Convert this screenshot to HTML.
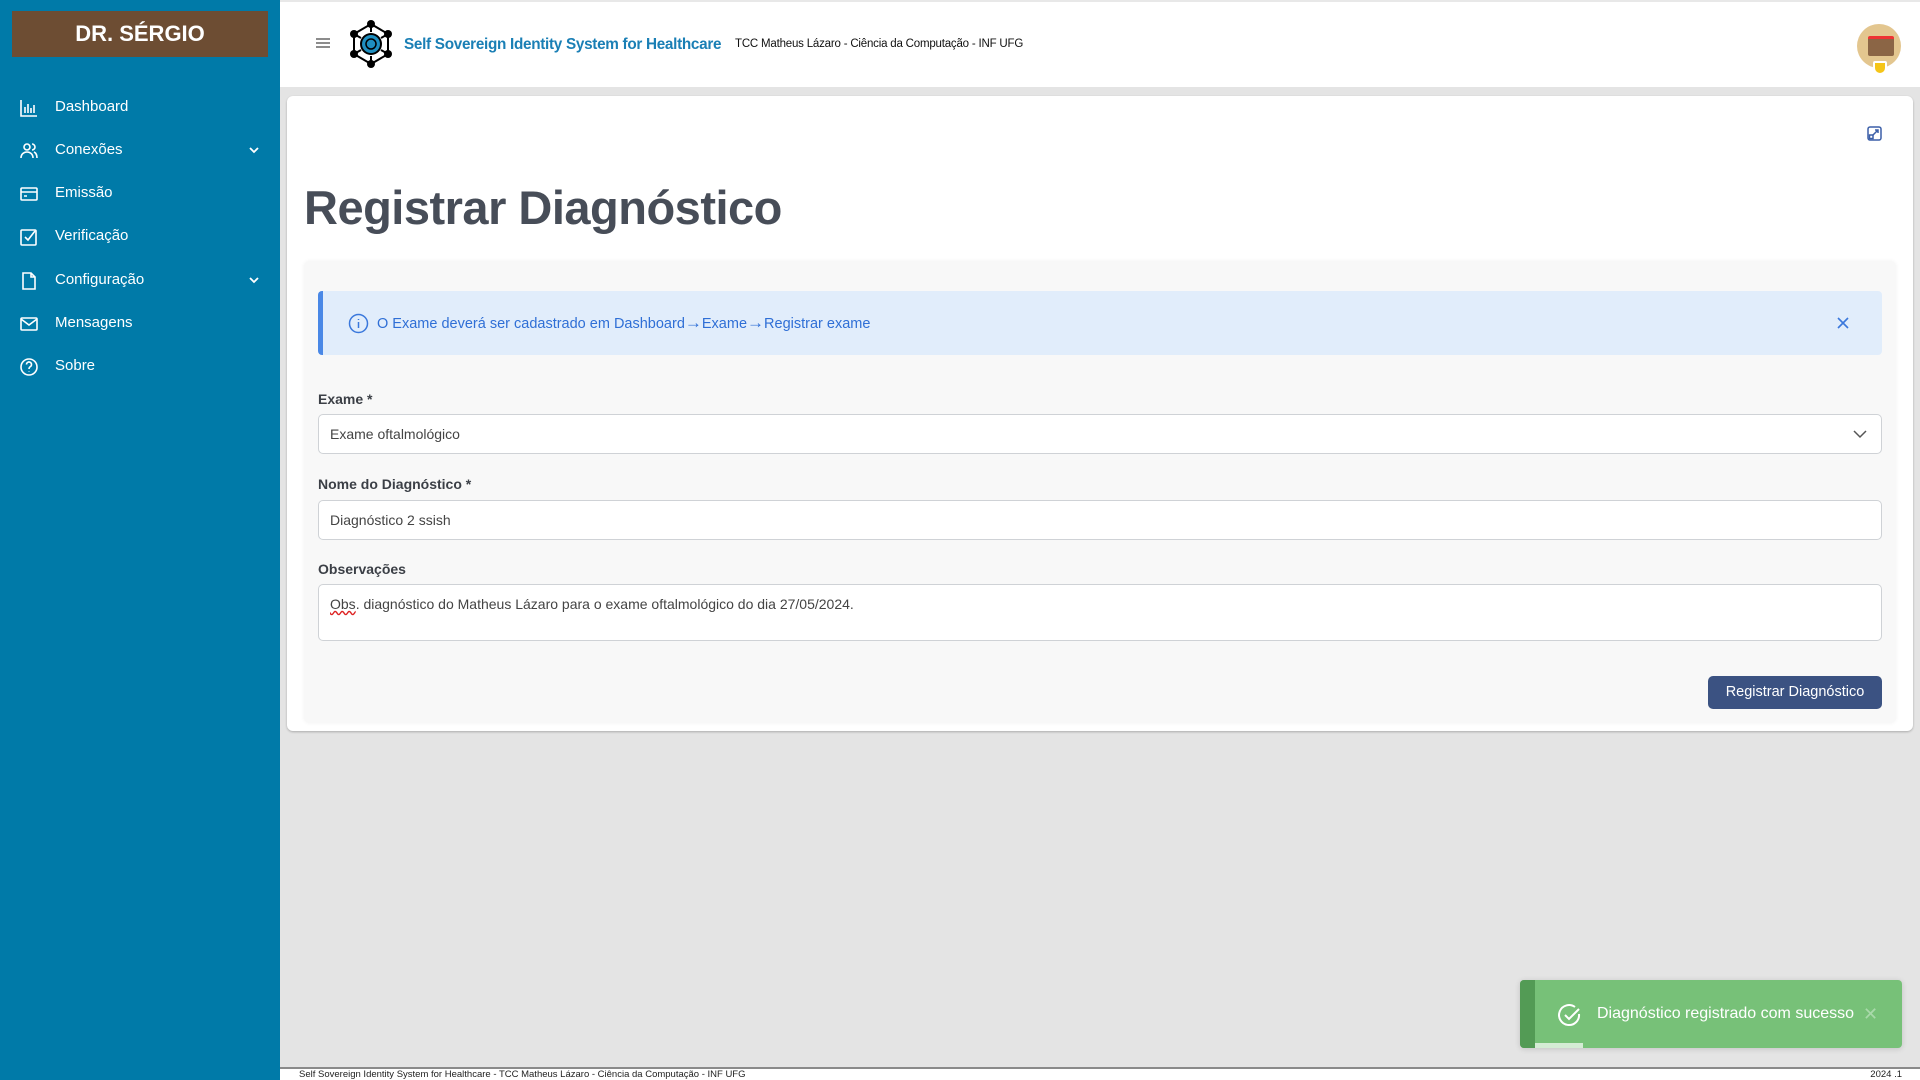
<!DOCTYPE html>
<html><head><meta charset="utf-8"><style>
*{box-sizing:border-box;margin:0;padding:0}
body{width:1920px;height:1080px;overflow:hidden;background:#e4e4e4;font-family:"Liberation Sans",sans-serif;position:relative}
.sb{position:absolute;left:0;top:0;width:280px;height:1080px;background:#007aa8}
.name{position:absolute;left:12px;top:11px;width:256px;height:46px;background:#6d4d33;color:#fff;font-weight:bold;font-size:22px;text-align:center;line-height:46px}
.nav{position:absolute;left:0;width:280px;color:#fff;font-size:15px;height:24px;line-height:24px}
.nav svg{position:absolute;left:19px;top:3px}
.nav span{position:absolute;left:55px}
.nav .ch{position:absolute;left:248px;top:6px}
.hd{position:absolute;left:280px;top:0;width:1640px;height:87px;background:#fff;border-top:2px solid #e8e8e8}
.card{position:absolute;left:287px;top:96px;width:1626px;height:635px;background:#fff;border-radius:6px;box-shadow:0 1px 2px rgba(0,0,0,.25)}
.panel{position:absolute;left:17px;top:165px;width:1592px;height:462px;background:#f8f8f8;border-radius:6px;box-shadow:0 0 4px rgba(0,0,0,.06)}
h1{position:absolute;left:17px;top:84px;font-size:47px;color:#474d58;font-weight:bold;letter-spacing:-0.5px}
.alert{position:absolute;left:14px;top:30px;width:1564px;height:64px;background:#e1edfb;border-left:5px solid #4a88e6;border-radius:4px;color:#2f6fd6;font-size:14.5px;line-height:64px;padding-left:54px}
.lbl{position:absolute;left:14px;font-size:14px;font-weight:bold;color:#3b3f46}
.inp{position:absolute;left:14px;width:1564px;height:40px;background:#fff;border:1px solid #cfd2d6;border-radius:5px;font-size:14px;color:#444;padding:0 11px;line-height:38px}
.btn{position:absolute;left:1404px;top:415px;width:174px;height:33px;background:#3b5282;color:#fff;border-radius:5px;font-size:14.5px;text-align:center;line-height:33px}
.toast{position:absolute;left:1520px;top:980px;width:382px;height:68px;background:#77c178;border-radius:4px;box-shadow:0 1px 6px rgba(0,0,0,.15);color:#fff;font-size:16px;line-height:68px;padding-left:77px;overflow:hidden}
.foot{position:absolute;left:280px;top:1067px;width:1640px;height:13px;background:#fff;border-top:2px solid #8a8a8a;font-size:9.5px;color:#222;line-height:11px}
</style></head><body>
<div class="sb">
<div class="name">DR. SÉRGIO</div>
<div class="nav" style="top:95px"><svg width="20" height="20" fill="none" stroke="#fff" stroke-width="1.6"><path d="M2 2v16h16M6 15V9M9 15V6M12 15V10M15 15V7"/></svg><span>Dashboard</span></div>
<div class="nav" style="top:138px"><svg width="20" height="20" fill="none" stroke="#fff" stroke-width="1.6"><circle cx="8" cy="6" r="3"/><path d="M2 17c0-4 3-6 6-6s6 2 6 6M13 3a3 3 0 010 6M15 11c2 1 3 3 3 6"/></svg><span>Conexões</span><svg class="ch" width="12" height="12" fill="none" stroke="#fff" stroke-width="1.8" style="left:248px;top:6px"><path d="M2 4l4 4 4-4"/></svg></div>
<div class="nav" style="top:181px"><svg width="20" height="20" fill="none" stroke="#fff" stroke-width="1.6"><rect x="2" y="4" width="16" height="12" rx="1"/><path d="M2 8h16M5 12h3"/></svg><span>Emissão</span></div>
<div class="nav" style="top:224px"><svg width="20" height="20" fill="none" stroke="#fff" stroke-width="1.6"><rect x="2" y="3" width="15" height="15" rx="1"/><path d="M6 10l3 3 7-9"/></svg><span>Verificação</span></div>
<div class="nav" style="top:268px"><svg width="20" height="20" fill="none" stroke="#fff" stroke-width="1.6"><path d="M4 2h8l4 4v12H4zM12 2v4h4"/></svg><span>Configuração</span><svg class="ch" width="12" height="12" fill="none" stroke="#fff" stroke-width="1.8" style="left:248px;top:6px"><path d="M2 4l4 4 4-4"/></svg></div>
<div class="nav" style="top:311px"><svg width="20" height="20" fill="none" stroke="#fff" stroke-width="1.6"><rect x="2" y="4" width="16" height="12" rx="1"/><path d="M2 5l8 6 8-6"/></svg><span>Mensagens</span></div>
<div class="nav" style="top:354px"><svg width="20" height="20" fill="none" stroke="#fff" stroke-width="1.6"><circle cx="10" cy="10" r="8"/><path d="M7.5 7.5a2.5 2.5 0 114 2c-1 .6-1.5 1.2-1.5 2.5M10 14.5v.5"/></svg><span>Sobre</span></div>
</div>
<div class="hd">
<svg style="position:absolute;left:36px;top:35px" width="14" height="12" stroke="#666" stroke-width="1.5"><path d="M0 2h14M0 6h14M0 10h14"/></svg>
<svg style="position:absolute;left:66px;top:17px" width="50" height="50"><g stroke="#000" stroke-width="2" fill="none"><path d="M25 5L42 15V35L25 45L8 35V15Z"/><path d="M25 5V13M42 15L35 19M42 35L35 31M25 45V37M8 35L15 31M8 15L15 19"/></g><g fill="#000"><circle cx="25" cy="5" r="4"/><circle cx="42" cy="15" r="4"/><circle cx="42" cy="35" r="4"/><circle cx="25" cy="45" r="4"/><circle cx="8" cy="35" r="4"/><circle cx="8" cy="15" r="4"/></g><circle cx="25" cy="25" r="11" fill="#000"/><circle cx="25" cy="25" r="9" fill="#1f8fc0"/><circle cx="25" cy="25" r="5" fill="none" stroke="#000" stroke-width="1.5"/></svg>
<div style="position:absolute;left:124px;top:34px;font-size:15.3px;font-weight:bold;color:#1a7fb5;letter-spacing:-0.3px">Self Sovereign Identity System for Healthcare</div>
<div style="position:absolute;left:455px;top:36px;font-size:11.5px;color:#111;letter-spacing:-0.2px">TCC Matheus Lázaro - Ciência da Computação - INF UFG</div>
<div style="position:absolute;left:1577px;top:22px;width:44px;height:44px;border-radius:50%;background:#e3c68f"></div>
<div style="position:absolute;left:1588px;top:34px;width:26px;height:20px;background:#8b6545;border-radius:2px;border-top:3px solid #e33"></div>
<div style="position:absolute;left:1593px;top:59px;width:14px;height:14px;background:#f5c518;border-radius:2px 2px 7px 7px;border:2px solid #fff"></div>
</div>
<div class="card">
<svg style="position:absolute;left:1580px;top:30px" width="15" height="15" fill="none" stroke="#3b5fa8" stroke-width="1.5"><rect x="1" y="1" width="13" height="13" rx="2"/><path d="M6 9l5-5M8 4h3v3"/><rect x="2.5" y="9" width="3.5" height="3.5"/></svg>
<h1>Registrar Diagnóstico</h1>
<div class="panel">
<div class="alert"><svg style="position:absolute;left:25px;top:22px" width="21" height="21" fill="none" stroke="#3a78dc" stroke-width="1.5"><circle cx="10.5" cy="10.5" r="9"/><path d="M10.5 9v6M10.5 6v1"/></svg>O Exame deverá ser cadastrado em Dashboard<span style="font-size:17px">→</span>Exame<span style="font-size:17px">→</span>Registrar exame<svg style="position:absolute;left:1514px;top:26px" width="12" height="12" stroke="#3a78dc" stroke-width="1.6"><path d="M1 1l10 10M11 1L1 11"/></svg></div>
<div class="lbl" style="top:130px">Exame *</div>
<div class="inp" style="top:153px">Exame oftalmológico<svg style="position:absolute;right:14px;top:14px" width="14" height="10" fill="none" stroke="#555" stroke-width="1.5"><path d="M1 2l6 6 6-6"/></svg></div>
<div class="lbl" style="top:215px">Nome do Diagnóstico *</div>
<div class="inp" style="top:239px">Diagnóstico 2 ssish</div>
<div class="lbl" style="top:300px">Observações</div>
<div class="inp" style="top:323px;height:57px"><span style="text-decoration:underline wavy #d22">Obs</span>. diagnóstico do Matheus Lázaro para o exame oftalmológico do dia 27/05/2024.</div>
<div class="btn">Registrar Diagnóstico</div>
</div>
</div>
<div class="toast"><div style="position:absolute;left:0;top:0;width:15px;height:68px;background:#539b55"></div><div style="position:absolute;left:15px;bottom:0;width:48px;height:5px;background:#d4ecd4"></div><svg style="position:absolute;left:38px;top:23px" width="24" height="24" fill="none" stroke="#fff" stroke-width="2"><path d="M21 11a10 10 0 11-4-7"/><path d="M7 12l4 4 10-10"/></svg>Diagnóstico registrado com sucesso<span style="position:absolute;left:343px;color:#a9d9aa;font-size:18px">✕</span></div>
<div class="foot"><span style="position:absolute;left:19px">Self Sovereign Identity System for Healthcare - TCC Matheus Lázaro - Ciência da Computação - INF UFG</span><span style="position:absolute;right:18px">2024 .1</span></div>
</body></html>
